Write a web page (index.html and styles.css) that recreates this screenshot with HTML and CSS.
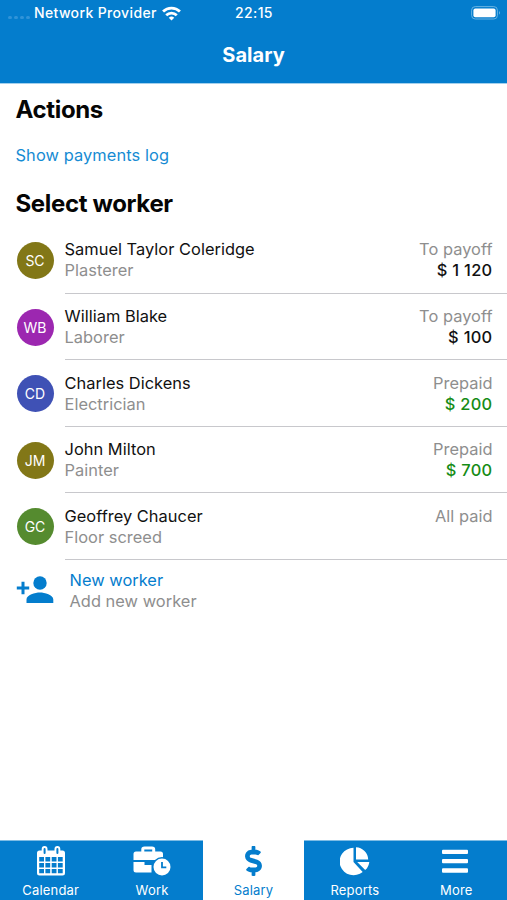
FILE: index.html
```html
<!DOCTYPE html>
<html lang="en">
<head>
<meta charset="utf-8">
<title>Salary</title>
<link rel="stylesheet" href="styles.css">
</head>
<body>
<header class="header">
  <div class="status">
    <div class="carrier">
      <span class="signal"><i></i><i></i><i></i><i></i></span>
      <span class="provider">Network Provider</span>
      <svg class="wifi" viewBox="0 0 18 14" width="19" height="15" fill="none" stroke="#fff" stroke-width="2.6"><path d="M1 5.200a11.400 11.400 0 0 1 16 0M4 8.700a7.100 7.100 0 0 1 10 0"/><path d="M9 13.700 6.400 11.100a3.800 3.800 0 0 1 5.200 0z" fill="#fff" stroke="none"/></svg>
    </div>
    <time class="clock">22:15</time>
    <svg class="battery" viewBox="0 0 30 14" width="30" height="14"><rect x=".6" y=".6" width="25.800" height="12.400" rx="3.600" fill="none" stroke="#68b3e2"/><rect x="2.400" y="2.400" width="22.200" height="8.900" rx="2" fill="#fff"/><path d="M28 4.800q1.600 2 0 4z" fill="#8ac5e9"/></svg>
  </div>
  <h1 class="title">Salary</h1>
</header>
<main class="content">
  <h2 class="heading">Actions</h2>
  <a class="log">Show payments log</a>
  <h2 class="heading">Select worker</h2>
  <ul class="workers">
    <li class="worker"><span class="avatar olive">SC</span><div class="row"><div><p class="name">Samuel Taylor Coleridge</p><p class="sub">Plasterer</p></div><div class="pay"><p class="sub">To payoff</p><p class="amount">$ 1 120</p></div></div></li>
    <li class="worker"><span class="avatar purple">WB</span><div class="row"><div><p class="name">William Blake</p><p class="sub">Laborer</p></div><div class="pay"><p class="sub">To payoff</p><p class="amount">$ 100</p></div></div></li>
    <li class="worker"><span class="avatar indigo">CD</span><div class="row"><div><p class="name">Charles Dickens</p><p class="sub">Electrician</p></div><div class="pay"><p class="sub">Prepaid</p><p class="amount green">$ 200</p></div></div></li>
    <li class="worker"><span class="avatar olive">JM</span><div class="row"><div><p class="name">John Milton</p><p class="sub">Painter</p></div><div class="pay"><p class="sub">Prepaid</p><p class="amount green">$ 700</p></div></div></li>
    <li class="worker"><span class="avatar leaf">GC</span><div class="row"><div><p class="name">Geoffrey Chaucer</p><p class="sub">Floor screed</p></div><div class="pay"><p class="sub">All paid</p></div></div></li>
  </ul>
  <div class="new">
    <svg class="add" viewBox="0 0 38 28" width="38" height="28" fill="#047dcd"><circle cx="24" cy="7" r="6.700"/><path d="M10.500 27v-3.600c0-4.300 8.700-6.800 13.400-6.800s13.400 2.500 13.400 6.800V27zM5.500 5.800h3v4.700h4.700v3H8.500v4.700h-3v-4.700H.8v-3h4.700z"/></svg>
    <div><p class="name link">New worker</p><p class="sub">Add new worker</p></div>
  </div>
</main>
<nav class="tabs">
  <a class="tab"><svg viewBox="0 0 28 30" width="28" height="30"><path fill="#fff" fill-rule="evenodd" d="M2.500 4.500H4.700V3a2.900 2.900 0 0 1 5.800 0v1.500h7V3a2.900 2.900 0 0 1 5.800 0v1.500h2.200Q28 4.500 28 7v20q0 2.500-2.500 2.500h-23Q0 29.500 0 27V7Q0 4.500 2.500 4.500zM2.200 11v4.500H7V11zm6.200 0v4.500h4.800V11zm6.300 0v4.500h4.800V11zm6.200 0v4.500h4.800V11zM2.200 17v4.500H7V17zm6.200 0v4.500h4.800V17zm6.300 0v4.500h4.800V17zm6.200 0v4.500h4.800V17zM2.200 23v4.300H7V23zm6.200 0v4.300h4.800V23zm6.300 0v4.300h4.800V23zm6.200 0v4.300h4.800V23z"/><path d="M7.600 3v4M20.400 3v4" stroke="#047dcd" stroke-width="2" stroke-linecap="round"/></svg><span>Calendar</span></a>
  <a class="tab"><svg viewBox="0 0 38 30" width="38" height="30"><path d="M9.800 6V3.300Q9.800 2 11.500 2h7.500q1.700 0 1.700 1.300V6" fill="none" stroke="#fff" stroke-width="3"/><path fill="#fff" d="M3 5.500h24.500q2.500 0 2.500 2.500v6H.5V8Q.5 5.500 3 5.500zM.5 16h11v3h7v7.500H3Q.5 26.500.5 24z"/><circle cx="29" cy="21" r="10" fill="#047dcd"/><circle cx="29" cy="21" r="8.500" fill="#fff"/><path d="M29 16v5.300h4.300" fill="none" stroke="#047dcd" stroke-width="1.800"/></svg><span>Work</span></a>
  <a class="tab active"><svg viewBox="0 0 288 512" width="17" height="30" fill="#047dcd"><path d="M209.200 233.400l-108-31.600C88.700 198.200 80 186.500 80 173.500c0-16.300 13.200-29.500 29.500-29.500h66.300c12.200 0 24.200 3.700 34.200 10.500 6.100 4.100 14.300 3.100 19.500-2l34.800-34c7.100-6.900 6.100-18.400-1.800-24.500C238 74.800 207.400 64.100 176 64V16c0-8.800-7.200-16-16-16h-32c-8.800 0-16 7.200-16 16v48h-2.500C45.800 64-5.400 118.700.5 183.600c4.200 46.100 39.400 83.600 83.800 96.600l102.500 30c12.500 3.700 21.200 15.300 21.200 28.300 0 16.300-13.200 29.500-29.500 29.500h-66.300C100 368 88 364.300 78 357.500c-6.100-4.100-14.300-3.100-19.500 2l-34.800 34c-7.100 6.900-6.100 18.400 1.800 24.500 24.500 19.200 55.100 29.900 86.500 30v48c0 8.800 7.200 16 16 16h32c8.800 0 16-7.200 16-16v-48.200c46.600-.9 90.300-28.600 105.700-72.700 21.500-61.600-14.600-124.800-72.500-141.700z"/></svg><span>Salary</span></a>
  <a class="tab"><svg viewBox="0 0 30 30" width="30" height="30" fill="#fff"><path d="M13.500 1.800v14.200l9.200 9.900A14 13.700 0 1 1 13.500 1.800zM16 1.300A12.700 12.700 0 0 1 28.200 13.500H16zM17.200 15.900h12.100a13 13 0 0 1-4.100 8.200z"/></svg><span>Reports</span></a>
  <a class="tab"><svg class="bars" viewBox="0 0 26 30" width="26" height="30" fill="#fff"><rect y="3.800" width="26" height="4.200" rx="1"/><rect y="13" width="26" height="4.200" rx="1"/><rect y="22.300" width="26" height="4.500" rx="1"/></svg><span>More</span></a>
</nav>
</body>
</html>
```
FILE: styles.css
```css
* { box-sizing: border-box; }
body, h1, h2, p, ul { margin: 0; padding: 0; }
body {
  height: 900px;
  display: flex;
  flex-direction: column;
  background: #fff;
  color: #111;
  font: 16.400px/21px Inter, "Liberation Sans", sans-serif;
  letter-spacing: 0.03px;
  overflow: hidden;
}
.header { height: 84px; background: #047dcd; border-bottom: 1px solid #a3d0ed; color: #fff; }
.status { display: grid; grid-template-columns: 1fr 60px 1fr; align-items: center; height: 26px; padding: 0 5px 0 8px; }
.carrier { display: flex; align-items: center; }
.signal { display: flex; gap: 2px; width: 26px; padding-top: 9px; }
.signal i { width: 4px; height: 3.500px; border-radius: 2px; background: #3094d8; }
.provider, .clock { font-size: 14px; line-height: 20px; font-weight: 500; letter-spacing: 0.36px; white-space: nowrap; }
.wifi { margin-left: 5px; }
.clock { text-align: center; margin-left: -2px; }
.battery { justify-self: end; margin-right: 1px; }
.title { margin-top: 18px; text-align: center; font-size: 20px; line-height: 22px; font-weight: 700; }
.content { flex: 1; }
.heading { padding-left: 15.500px; margin-top: 12px; height: 28px; font-size: 24px; line-height: 28px; font-weight: 700; letter-spacing: -0.35px; color: #050505; }
.log { display: block; margin: 21px 0 0 15.500px; letter-spacing: 0.09px; color: #168bd3; }
.log + .heading { margin-top: 24px; }
.workers { list-style: none; margin-top: 9px; }
.worker { display: flex; height: 66.600px; padding-left: 16.500px; }
.avatar { flex: none; width: 37px; height: 37px; margin: 15px 11px 0 0; border-radius: 50%; color: #fff; font-size: 14px; line-height: 37px; letter-spacing: 0; text-align: center; }
.olive { background: #827717; }
.purple { background: #9c27b0; }
.indigo { background: #3f51b5; }
.leaf { background: #558b2f; }
.row { flex: 1; display: flex; justify-content: space-between; padding: 12.400px 14.500px 0 0; border-bottom: 1px solid #c8c8cc; }
.pay { text-align: right; }
.sub { color: #8e8e8e; }
.amount { font-weight: 450; letter-spacing: 0.3px; }
.green { color: #168c16; }
.new { display: flex; gap: 15.500px; padding: 10px 0 0 16px; }
.add { margin-top: 6px; }
.link { color: #047dcd; }
.tabs { display: grid; grid-template-columns: repeat(5, 1fr); height: 60px; background: #047dcd; color: #fff; }
.tab { display: flex; flex-direction: column; align-items: center; padding-top: 5px; border-top: 1px solid #7dbce5; font-size: 13px; line-height: 18px; letter-spacing: 0.2px; }
.tab span { margin-top: 5px; }
.bars { margin-right: 3px; }
.active { background: #fff; border-top-color: #fff; color: #047dcd; }
```
